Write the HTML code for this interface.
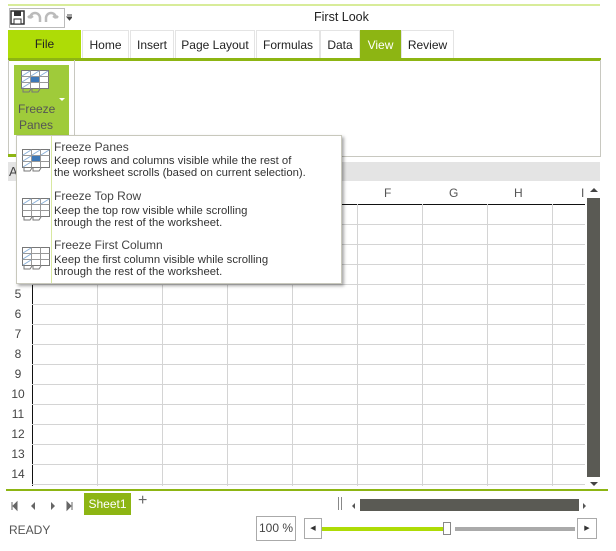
<!DOCTYPE html>
<html><head><style>
*{margin:0;padding:0;box-sizing:border-box}
body{width:616px;height:551px;background:#fff;font-family:"Liberation Sans",sans-serif;position:relative;overflow:hidden;color:#333}
.a{position:absolute}
.t{font-size:12px;white-space:nowrap}
.tab{position:absolute;top:30px;height:29px;font-size:12px;line-height:29px;text-align:center;color:#222;border:1px solid #e4e4e4;border-bottom:none;background:#fff}
.vl{position:absolute;top:204px;width:1px;height:282px;background:#d4d4d4}
.hl{position:absolute;left:32px;width:553px;height:1px;background:#d4d4d4}
.rn{position:absolute;left:8px;width:20px;text-align:center;font-size:12px;color:#444}
.ch{position:absolute;top:186px;font-size:12px;color:#555}
.nv{position:absolute;top:498px;font-size:9px;color:#555}
</style></head><body>
<div class="a" style="left:8px;top:4px;width:592px;height:2px;background:#d8ec9a"></div>
<div class="a" style="left:9px;top:8px;width:56px;height:20px;border:1px solid #bbb"></div>
<svg class="a" style="left:10px;top:9px" width="62" height="18"><rect x="1" y="2" width="13" height="13" fill="none" stroke="#333" stroke-width="1.5"/><rect x="4" y="2" width="7" height="5" fill="#333"/><rect x="4" y="10" width="7" height="5" fill="#fff" stroke="#333"/><path d="M20 9 a5 5 0 0 1 10 0 v4 M20 9 l-2 -2 M20 9 l3 -2" stroke="#bbb" stroke-width="2.5" fill="none"/><path d="M46 9 a5 5 0 0 0 -10 0 v4 M46 9 l2 -2 M46 9 l-3 -2" stroke="#bbb" stroke-width="2.5" fill="none"/><path d="M57 8 h5 l-2.5 3z M57 6h5" stroke="#444" fill="#444"/></svg>
<div class="a t" style="left:314px;top:10px;font-size:12.5px;color:#222">First Look</div>
<div class="a" style="left:8px;top:30px;width:73px;height:29px;background:#aedc06;font-size:12px;line-height:29px;text-align:center;color:#222">File</div>
<div class="tab" style="left:82px;width:47px">Home</div>
<div class="tab" style="left:130px;width:44px">Insert</div>
<div class="tab" style="left:175px;width:80px">Page Layout</div>
<div class="tab" style="left:256px;width:64px">Formulas</div>
<div class="tab" style="left:320px;width:40px">Data</div>
<div class="tab" style="left:360px;width:41px;background:#8db513;color:#fff;border-color:#8db513">View</div>
<div class="tab" style="left:401px;width:53px">Review</div>
<div class="a" style="left:8px;top:58px;width:593px;height:3px;background:#8db513"></div>
<div class="a" style="left:8px;top:60px;width:593px;height:97px;border:1px solid #c8c8c0;border-top:none"></div>
<div class="a" style="left:8px;top:154px;width:10px;height:3px;background:#8db513"></div>
<div class="a" style="left:74px;top:60px;width:1px;height:96px;background:#c8c8c0"></div>
<div class="a" style="left:14px;top:65px;width:55px;height:70px;background:#9fcb3a"></div>
<svg class="a" style="left:20px;top:69px" width="30" height="27"><rect x="1.5" y="1.5" width="27" height="18" fill="#fff" stroke="#777"/><path d="M1.5 7.5h27M1.5 13.5h27M10.5 1.5v18M19.5 1.5v18" stroke="#999"/><rect x="11" y="8" width="8" height="5" fill="#3d78b8"/><path d="M2 7l8-5M2 13l8-5M2 19l8-5M11 7l8-5M20 7l8-5" stroke="#8ab0d8"/><path d="M3 20v3h6l2-3M12 20v3h6l2-3" stroke="#777" fill="none"/></svg>
<div class="a t" style="left:18px;top:102px;color:#555">Freeze</div>
<div class="a t" style="left:19px;top:118px;color:#555">Panes</div>
<div class="a" style="left:59px;top:98px;border:3px solid transparent;border-top:3px solid #fff"></div>
<div class="a" style="left:8px;top:162px;width:592px;height:19px;background:#e4e4e4"></div>
<div class="a t" style="left:9px;top:164px;font-size:13px;color:#444">A</div>
<div class="ch" style="left:384px">F</div>
<div class="ch" style="left:449px">G</div>
<div class="ch" style="left:514px">H</div>
<div class="ch" style="left:581px">I</div>
<div class="a" style="left:32px;top:204px;width:553px;height:1px;background:#111"></div>
<div class="a" style="left:32px;top:204px;width:1px;height:282px;background:#111"></div>
<div class="vl" style="left:97px"></div><div class="vl" style="left:162px"></div><div class="vl" style="left:227px"></div><div class="vl" style="left:292px"></div><div class="vl" style="left:357px"></div><div class="vl" style="left:422px"></div><div class="vl" style="left:487px"></div><div class="vl" style="left:552px"></div>
<div class="hl" style="top:224px"></div><div class="hl" style="top:244px"></div><div class="hl" style="top:264px"></div><div class="hl" style="top:284px"></div><div class="hl" style="top:304px"></div><div class="hl" style="top:324px"></div><div class="hl" style="top:344px"></div><div class="hl" style="top:364px"></div><div class="hl" style="top:384px"></div><div class="hl" style="top:404px"></div><div class="hl" style="top:424px"></div><div class="hl" style="top:444px"></div><div class="hl" style="top:464px"></div><div class="hl" style="top:484px"></div>
<div class="rn" style="top:287px">5</div><div class="rn" style="top:307px">6</div><div class="rn" style="top:327px">7</div><div class="rn" style="top:347px">8</div><div class="rn" style="top:367px">9</div><div class="rn" style="top:387px">10</div><div class="rn" style="top:407px">11</div><div class="rn" style="top:427px">12</div><div class="rn" style="top:447px">13</div><div class="rn" style="top:467px">14</div>
<div class="a" style="left:590px;top:188px;border:4px solid transparent;border-bottom:4px solid #444;border-top:none"></div>
<div class="a" style="left:587px;top:198px;width:13px;height:279px;background:#5a5a54"></div>
<div class="a" style="left:590px;top:482px;border:4px solid transparent;border-top:4px solid #444;border-bottom:none"></div>
<div class="a" style="left:6px;top:489px;width:602px;height:2px;background:#8db513"></div>
<svg class="a" style="left:10px;top:500px" width="65" height="12"><path d="M2 2v8M7 2v8l-4-4z" stroke="#666" fill="#666"/><path d="M25 2v8l-4-4z" fill="#666"/><path d="M41 2v8l4-4z" fill="#666"/><path d="M57 2v8l4-4zM62 2v8" stroke="#666" fill="#666"/></svg>
<div class="a" style="left:84px;top:493px;width:47px;height:22px;background:#8db513;color:#fff;font-size:12px;line-height:22px;text-align:center">Sheet1</div>
<div class="a t" style="left:138px;top:492px;font-size:16px;color:#666">+</div>
<div class="a" style="left:338px;top:497px;width:4px;height:13px;border-left:1px solid #888;border-right:1px solid #888"></div>
<div class="a" style="left:352px;top:503px;border:3px solid transparent;border-right:3px solid #555;border-left:none"></div>
<div class="a" style="left:360px;top:499px;width:219px;height:12px;background:#5a5a54"></div>
<div class="a" style="left:583px;top:503px;border:3px solid transparent;border-left:3px solid #555;border-right:none"></div>
<div class="a t" style="left:9px;top:523px;color:#555">READY</div>
<div class="a" style="left:256px;top:516px;width:40px;height:25px;border:1px solid #aaa;font-size:12px;line-height:23px;text-align:center;color:#444">100 %</div>
<div class="a" style="left:304px;top:518px;width:18px;height:21px;border:1px solid #aaa;font-size:7px;line-height:19px;text-align:center">◀</div>
<div class="a" style="left:322px;top:527px;width:123px;height:4px;background:#aedc06"></div>
<div class="a" style="left:443px;top:522px;width:8px;height:13px;border:1px solid #888;background:#fff"></div>
<div class="a" style="left:455px;top:527px;width:120px;height:4px;background:#aaa"></div>
<div class="a" style="left:577px;top:518px;width:20px;height:21px;border:1px solid #aaa;font-size:7px;line-height:19px;text-align:center">▶</div>
<div class="a" style="left:16px;top:135px;width:326px;height:149px;background:#fff;border:1px solid #c8c8bc;box-shadow:2px 2px 3px rgba(0,0,0,.35)"></div>
<div class="a" style="left:51px;top:136px;width:1px;height:147px;background:#d8e8a0"></div>
<svg class="a" style="left:21px;top:148px" width="30" height="130">
<g><rect x="1.5" y="1.5" width="27" height="18" fill="#fff" stroke="#777"/><path d="M1.5 7.5h27M1.5 13.5h27M10.5 1.5v18M19.5 1.5v18" stroke="#999"/><rect x="11" y="8" width="8" height="5" fill="#3d78b8"/><path d="M2 7l8-5M2 13l8-5M2 19l8-5M11 7l8-5M20 7l8-5" stroke="#8ab0d8"/><path d="M3 20v3h6l2-3M12 20v3h6l2-3" stroke="#777" fill="none"/></g>
<g transform="translate(0,49)"><rect x="1.5" y="1.5" width="27" height="18" fill="#fff" stroke="#777"/><path d="M1.5 7.5h27M1.5 13.5h27M10.5 1.5v18M19.5 1.5v18" stroke="#999"/><path d="M2 7l8-5M11 7l8-5M20 7l8-5" stroke="#8ab0d8"/><path d="M3 20v3h6l2-3M12 20v3h6l2-3" stroke="#777" fill="none"/></g>
<g transform="translate(0,98)"><rect x="1.5" y="1.5" width="27" height="18" fill="#fff" stroke="#777"/><path d="M1.5 7.5h27M1.5 13.5h27M10.5 1.5v18M19.5 1.5v18" stroke="#999"/><path d="M2 7l8-5M2 13l8-5M2 19l8-5" stroke="#8ab0d8"/><path d="M3 20v3h6l2-3M12 20v3h6l2-3" stroke="#777" fill="none"/></g>
</svg>
<div class="a t" style="left:54px;top:140px;color:#444">Freeze Panes</div>
<div class="a t" style="left:54px;top:155px;font-size:11.3px;line-height:12px;color:#333">Keep rows and columns visible while the rest of<br>the worksheet scrolls (based on current selection).</div>
<div class="a t" style="left:54px;top:189px;color:#444">Freeze Top Row</div>
<div class="a t" style="left:54px;top:205px;font-size:11.3px;line-height:12px;color:#333">Keep the top row visible while scrolling<br>through the rest of the worksheet.</div>
<div class="a t" style="left:54px;top:238px;color:#444">Freeze First Column</div>
<div class="a t" style="left:54px;top:254px;font-size:11.3px;line-height:12px;color:#333">Keep the first column visible while scrolling<br>through the rest of the worksheet.</div>
</body></html>
